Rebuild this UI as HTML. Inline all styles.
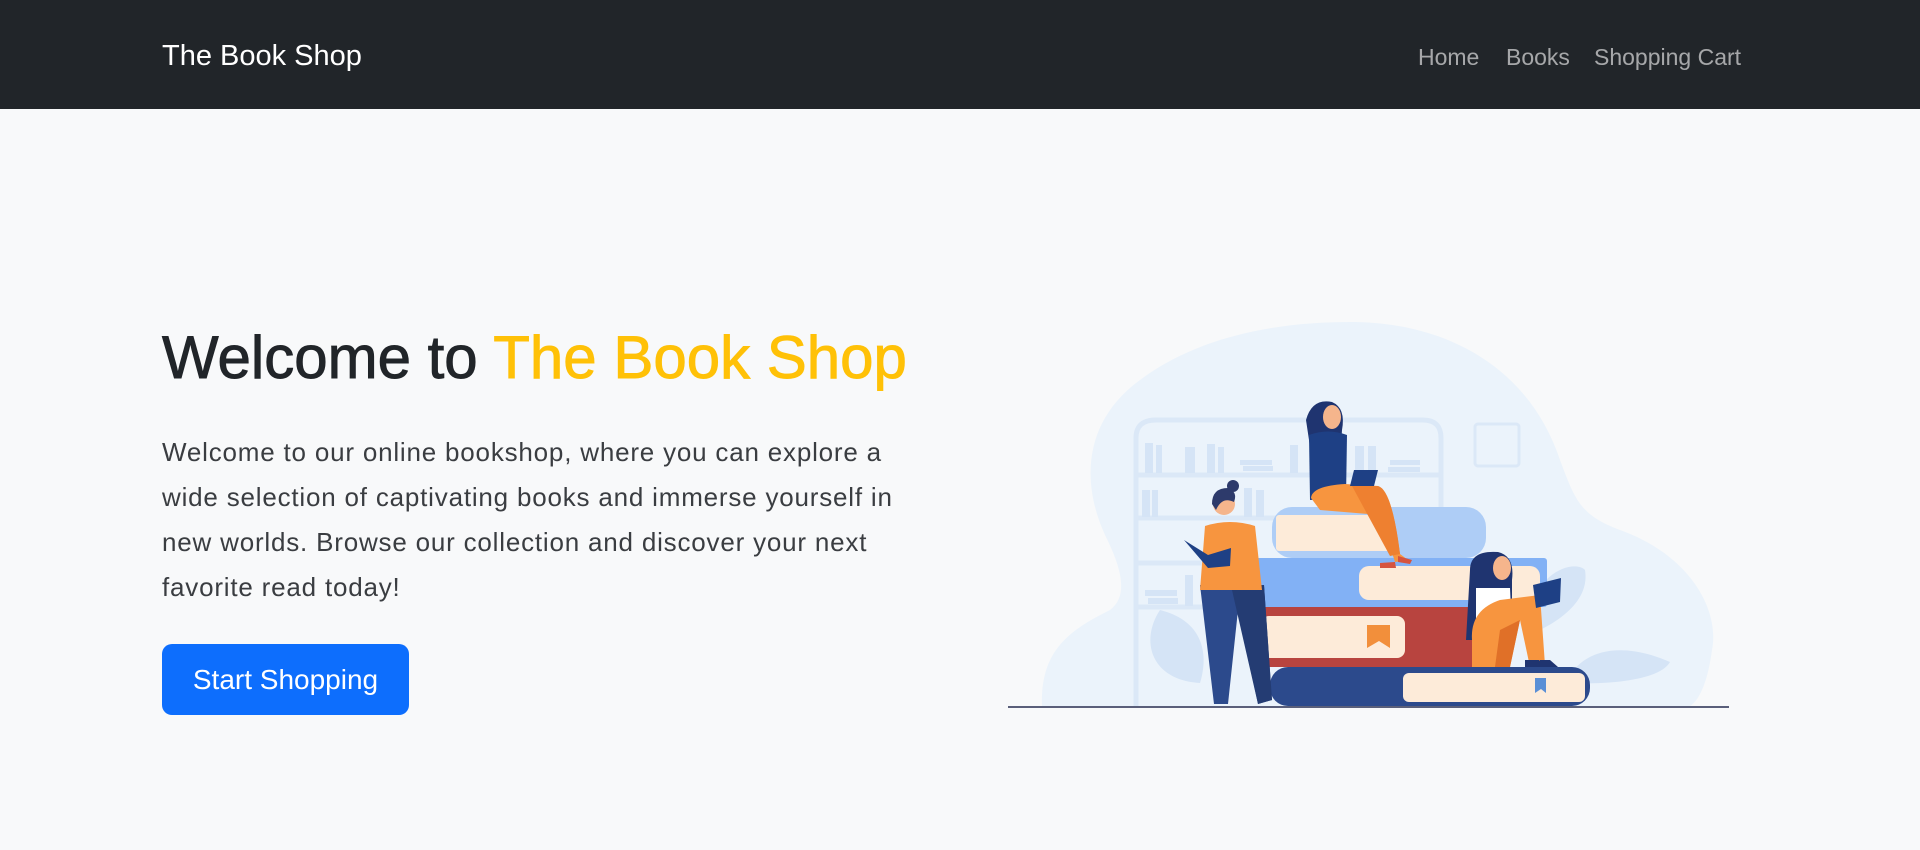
<!DOCTYPE html>
<html><head><meta charset="utf-8"><style>
*{margin:0;padding:0;box-sizing:border-box}
body{width:1920px;height:850px;background:#f8f9fa;font-family:"Liberation Sans",sans-serif;position:relative;overflow:hidden}
.nav{position:absolute;left:0;top:0;width:1920px;height:109px;background:#212529}
.brand{position:absolute;left:162px;top:38px;font-size:29px;color:#fff;line-height:36px}
.links{position:absolute;top:43px;font-size:23px;color:rgba(255,255,255,.6);line-height:28px}
h1{position:absolute;left:162px;top:323px;font-size:60px;font-weight:normal;color:#212529;-webkit-text-stroke:.9px #212529;line-height:70px;white-space:nowrap}
h1 span{color:#ffc107;-webkit-text-stroke:.9px #ffc107}
p{position:absolute;left:162px;top:430px;font-size:26px;letter-spacing:0.8px;line-height:45px;color:#3a3d41;white-space:nowrap}
.btn{position:absolute;left:162px;top:644px;width:247px;height:71px;background:#0d6efd;border-radius:10px;color:#fff;font-size:28px;line-height:71px;text-align:center}
svg{position:absolute;left:1000px;top:310px}
</style></head><body>
<div class="nav">
<div class="brand">The Book Shop</div>
<div class="links" style="left:1418px">Home</div>
<div class="links" style="left:1506px">Books</div>
<div class="links" style="left:1594px">Shopping Cart</div>
</div>
<h1>Welcome to <span>The Book Shop</span></h1>
<p>Welcome to our online bookshop, where you can explore a<br>wide selection of captivating books and immerse yourself in<br>new worlds. Browse our collection and discover your next<br>favorite read today!</p>
<div class="btn">Start Shopping</div>
<svg width="740" height="410" viewBox="0 0 740 410">
<path d="M42 396 C40 340 70 320 110 300 C130 285 120 255 105 225 C80 170 85 110 140 70 C200 25 280 12 350 12 C450 12 530 60 560 150 C575 190 580 205 620 220 C690 245 720 300 712 340 C708 370 700 390 690 396 Z" fill="#ebf3fb"/>
<g fill="none" stroke="#dbe8f7" stroke-width="5">
<path d="M136 396 V128 Q136 110 156 110 H423 Q441 110 441 128 V396"/>
<path d="M136 165 H441 M136 208 H441 M136 253 H441 M136 297 H441"/>
<rect x="475" y="114" width="44" height="42" rx="3" stroke-width="3"/>
</g>
<g fill="#d5e4f6">
<rect x="145" y="133" width="8" height="30"/><rect x="156" y="135" width="6" height="28"/><rect x="185" y="137" width="10" height="26"/><rect x="207" y="134" width="8" height="29"/><rect x="218" y="137" width="6" height="26"/><rect x="240" y="150" width="32" height="5"/><rect x="243" y="156" width="30" height="5"/><rect x="290" y="135" width="8" height="28"/><rect x="355" y="136" width="9" height="27"/><rect x="368" y="136" width="8" height="27"/><rect x="390" y="150" width="30" height="5"/><rect x="388" y="157" width="32" height="5"/>
<rect x="142" y="180" width="8" height="27"/><rect x="152" y="180" width="6" height="27"/><rect x="244" y="178" width="8" height="29"/><rect x="256" y="180" width="8" height="27"/>
<rect x="145" y="280" width="32" height="6"/><rect x="148" y="288" width="30" height="6"/><rect x="185" y="265" width="8" height="31"/>
<path d="M160 300 C140 330 150 370 200 373 C210 340 200 310 160 300Z"/><path d="M566 373 C580 340 620 330 670 352 C660 370 610 375 566 373Z"/><path d="M530 300 C540 260 575 250 585 260 C590 290 560 310 540 320Z"/>
</g>
<line x1="8" y1="397" x2="729" y2="397" stroke="#5a5f7a" stroke-width="2"/>
<rect x="270" y="357" width="320" height="39" rx="18" fill="#2c4a8c"/>
<rect x="403" y="363" width="182" height="29" rx="6" fill="#fdebd9"/>
<path d="M535 368 h11 v15 l-5 -4 l-6 4z" fill="#5a8fd6"/>
<rect x="254" y="297" width="230" height="60" rx="3" fill="#b8443f"/>
<rect x="261" y="306" width="144" height="42" rx="8" fill="#fdebd9"/>
<path d="M367 315 h23 v23 l-11 -7 l-12 7z" fill="#f28f3b"/>
<rect x="245" y="248" width="302" height="49" rx="3" fill="#82b1f5"/>
<rect x="359" y="256" width="181" height="34" rx="10" fill="#fdebd9"/>
<rect x="272" y="197" width="214" height="51" rx="20" fill="#aecdf6"/>
<rect x="276" y="205" width="116" height="36" rx="3" fill="#fdebd9"/>
<path d="M200 275 L264 275 L272 390 L258 394 L238 300 L228 394 L214 394 Z" fill="#2c4a8c"/>
<path d="M232 280 L264 275 L272 390 L258 394 Z" fill="#243c73"/>
<path d="M205 216 Q230 208 255 216 L262 280 L200 280 Z" fill="#f7953f"/>
<circle cx="224" cy="194" r="11" fill="#f5b58c"/>
<path d="M212 194 Q212 178 228 178 Q238 182 234 192 Q222 186 216 200Z" fill="#2d3a6b"/>
<circle cx="233" cy="176" r="6" fill="#2d3a6b"/>
<path d="M184 230 L208 245 L231 238 L230 256 L208 258 Z" fill="#1e4085"/>
<path d="M306 110 Q312 88 332 92 Q346 98 342 120 L340 150 L312 150 Z" fill="#1f3470"/>
<ellipse cx="332" cy="107" rx="9" ry="12" fill="#f5b58c"/>
<path d="M309 125 Q328 118 347 125 L346 188 L310 190 Z" fill="#1e4085"/>
<path d="M311 188 Q312 176 345 174 L378 176 Q392 180 400 244 L408 250 L395 252 L380 205 L320 200 Z" fill="#f7953f"/>
<path d="M352 176 L378 176 Q392 180 400 244 L390 246 Z" fill="#ee8030"/>
<path d="M354 160 L378 160 L374 176 L350 176Z" fill="#1e4085"/>
<path d="M380 253 L395 252 L396 258 L380 258Z M398 246 L412 250 L410 254 L398 252Z" fill="#d6543f"/>
<path d="M470 260 Q470 240 498 242 Q515 246 512 270 L512 330 L466 330 Z" fill="#1f3470"/>
<ellipse cx="502" cy="258" rx="9" ry="12" fill="#f5b58c"/>
<path d="M476 278 L510 278 L512 322 L476 322 Z" fill="#fff"/>
<path d="M472 330 Q470 300 500 290 L540 285 L545 355 L530 357 L520 310 L510 357 L472 357 Z" fill="#f7953f"/>
<path d="M500 320 L520 310 L510 357 L495 357Z" fill="#e07028"/>
<path d="M533 275 L561 268 L560 292 L536 298 Z" fill="#1e4085"/>
<path d="M525 350 h14 l8 7 h-22z M540 350 h10 l8 7 h-18z" fill="#1f3470"/>
</svg>
</body></html>
